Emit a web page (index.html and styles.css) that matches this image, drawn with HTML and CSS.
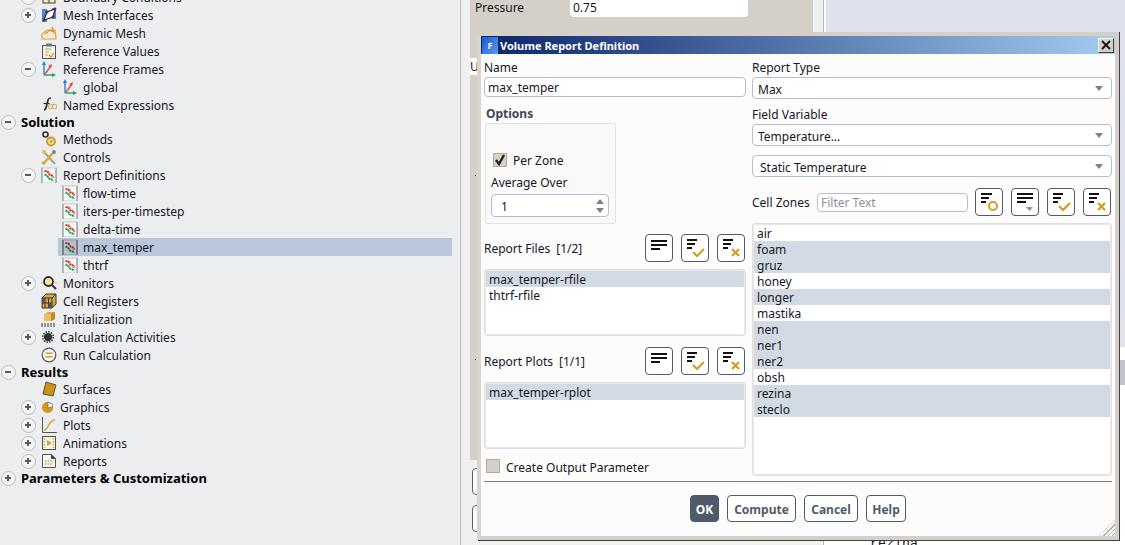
FILE: index.html
```html
<!DOCTYPE html>
<html lang="en">
<head>
    <meta charset="UTF-8">
    <link rel="stylesheet" href="styles.css">
    <title>Volume Report Definition</title>
</head>
<body>

    <svg class="defs" width="0" height="0">
        <symbol id="i-boundary" viewBox="0 0 16 16"><rect x="2" y="2" width="12" height="12" fill="#f3e6c4" stroke="#444"/><path d="M2 8h12M8 2v12" stroke="#444"/></symbol>
        <symbol id="i-interface" viewBox="0 0 16 16"><rect x="1" y="2" width="5" height="13" fill="#4a86d8"/><rect x="11" y="1" width="4" height="11" fill="#4a86d8"/><path d="M3 13 6 5l8-3-2 8z" fill="#fff" stroke="#402028" stroke-width="1.2"/><circle cx="6" cy="5" r="1.4" fill="#7a1c28"/><circle cx="12" cy="10" r="1.4" fill="#7a1c28"/><circle cx="3" cy="13" r="1.4" fill="#7a1c28"/><circle cx="14" cy="2" r="1.4" fill="#7a1c28"/></symbol>
        <symbol id="i-dynamic" viewBox="0 0 16 16"><path d="M1 14V9l5-4h8l1 9z" fill="#f4ecd8" stroke="#d8a840" stroke-width="1.2"/><path d="M4 9l5-4 4 2-2-5" fill="none" stroke="#d09a28" stroke-width="1.4"/></symbol>
        <symbol id="i-refvalues" viewBox="0 0 16 16"><rect x="1.5" y="2.5" width="13" height="13" fill="#f1f1ee" stroke="#555"/><rect x="5" y="0.5" width="6" height="3" fill="#777"/><path d="M4 6h6M4 9h4M4 12h3" stroke="#d8a030" stroke-width="1.2"/><path d="M8 12l2 2 3-4" fill="none" stroke="#c99422" stroke-width="1.2"/></symbol>
        <symbol id="i-frames" viewBox="0 0 16 16"><path d="M3 14V3" stroke="#2a7fc8" stroke-width="1.4"/><path d="M3 0 1 4h4z" fill="#2a7fc8"/><path d="M3 14h10" stroke="#2a9a60" stroke-width="1.4"/><path d="M15 14l-4-2v4z" fill="#2a9a60"/><path d="M4 13l6-8" stroke="#e04a4a" stroke-width="1.4"/><path d="M11 3l-4 2 3 2z" fill="#e04a4a"/></symbol>
        <symbol id="i-methods" viewBox="0 0 16 16"><circle cx="4.5" cy="3.5" r="2.5" fill="none" stroke="#333" stroke-width="1.6"/><circle cx="10" cy="10.5" r="4" fill="#f0d890" stroke="#d09a28" stroke-width="1.8"/><circle cx="10" cy="10.5" r="1.2" fill="#d09a28"/></symbol>
        <symbol id="i-controls" viewBox="0 0 16 16"><path d="M14 15 3 3" stroke="#a8a290" stroke-width="2"/><path d="M2 15 13 3" stroke="#d8a838" stroke-width="2.4"/><circle cx="3" cy="3" r="2" fill="#e0c060"/><circle cx="13" cy="3" r="2" fill="#8a8678"/><circle cx="2.5" cy="14" r="1.6" fill="#d0a030"/></symbol>
        <symbol id="i-report" viewBox="0 0 16 16"><rect x="0.500" y="1" width="15" height="15" fill="#f7f7f7" stroke="#c4c8cc"/><path d="M1 1v15M15 1v15" stroke="#a4aab0" stroke-width="1.600"/><path d="M3.500 4l3 .5 2 3 2.500 1 1.500 2" fill="none" stroke="#e02828" stroke-width="2" stroke-dasharray="2.200 .5"/><path d="M3.500 7.500l2.500 1 2 3 2.500 1 2 1" fill="none" stroke="#20a840" stroke-width="2" stroke-dasharray="2.200 .5"/></symbol>
        <symbol id="i-report-sel" viewBox="0 0 16 16"><rect x="0.500" y="1" width="15" height="15" fill="#b8c2cc" stroke="#8f98a2"/><path d="M1 1v15M15 1v15" stroke="#6f757c" stroke-width="1.600"/><path d="M3.500 4l3 .5 2 3 2.500 1 1.500 2" fill="none" stroke="#a02838" stroke-width="2" stroke-dasharray="2.200 .5"/><path d="M3.500 7.500l2.500 1 2 3 2.500 1 2 1" fill="none" stroke="#207840" stroke-width="2" stroke-dasharray="2.200 .5"/></symbol>
        <symbol id="i-monitors" viewBox="0 0 16 16"><path d="M0 8h2M14 8h2" stroke="#d8b060"/><circle cx="7.5" cy="6.500" r="4.500" fill="#f4e4b0" stroke="#2a2a2a" stroke-width="1.800"/><path d="M11 10l4 4" stroke="#333" stroke-width="2"/></symbol>
        <symbol id="i-registers" viewBox="0 0 16 16"><path d="M1 5 5 1h10v10l-4 4H1z" fill="#d8a838" stroke="#333"/><path d="M1 5h10v10M11 5l4-4M4 5v10M7.5 5v10M1 10h10" fill="none" stroke="#333"/><rect x="1" y="5" width="3" height="5" fill="#555"/><rect x="7.5" y="10" width="3.5" height="5" fill="#555"/></symbol>
        <symbol id="i-calc" viewBox="0 0 16 16"><circle cx="8" cy="8" r="5.5" fill="#2e3238"/><circle cx="8" cy="8" r="7" fill="none" stroke="#2e3238" stroke-width="2" stroke-dasharray="2 1.6"/></symbol>
        <symbol id="i-run" viewBox="0 0 16 16"><circle cx="8" cy="8" r="6.8" fill="#f4f4f2" stroke="#555" stroke-width="1.2"/><path d="M4.5 6.3h7M4.5 9.7h7" stroke="#d8a020" stroke-width="1.6"/></symbol>
        <symbol id="i-surfaces" viewBox="0 0 16 16"><path d="M5 1l10 3-3 11-10-2z" fill="#cc9410" stroke="#555"/></symbol>
        <symbol id="i-graphics" viewBox="0 0 16 16"><circle cx="7.500" cy="8.500" r="7.500" fill="#d0981c"/><path d="M8 1.500l6.500 2.500-1 4-5.500 1z" fill="#f4f4f4" stroke="#666" stroke-width=".8"/></symbol>
        <symbol id="i-plots" viewBox="0 0 16 16"><path d="M1.5 0v15.5H16" fill="none" stroke="#555"/><path d="M3 13c5 0 4-10 11-10" fill="none" stroke="#d8a030" stroke-width="1.3"/></symbol>
        <symbol id="i-anim" viewBox="0 0 16 16"><rect x="1.5" y="1.5" width="13" height="13" fill="#f6f4ec" stroke="#555"/><path d="M3.5 3v10M12.5 3v10" stroke="#d8a030" stroke-dasharray="1.5 1.5" stroke-width="1.5"/><path d="M6 5l5 3-5 3z" fill="#d8a030"/></symbol>
        <symbol id="i-reports" viewBox="0 0 16 16"><path d="M1.5 1.5h9l4 4v9h-13z" fill="#f6f6f4" stroke="#555"/><path d="M10.5 1.5v4h4" fill="#444" stroke="#444"/><path d="M4 8h8M4 11h8" stroke="#d8a030" stroke-dasharray="1.5 1.2" stroke-width="1.5"/></symbol>
        <symbol id="b-lines" viewBox="0 0 26 26"><path d="M5 6h16M5 10h16M5 14h9" stroke="#111" stroke-width="2"/></symbol>
        <symbol id="b-all" viewBox="0 0 26 26"><path d="M5 5h16M5 9h16M5 13h9" stroke="#111" stroke-width="2"/><path d="M14 18h7l-3.500 4z" fill="#8d95a0"/></symbol>
        <symbol id="b-circle" viewBox="0 0 26 26"><path d="M5 5h11M5 9h8M5 13h5" stroke="#111" stroke-width="2"/><circle cx="17" cy="17" r="4" fill="none" stroke="#d39e1e" stroke-width="2"/></symbol>
        <symbol id="b-check" viewBox="0 0 26 26"><path d="M5 5h10M5 9h8M5 13h5" stroke="#111" stroke-width="2"/><path d="M11 17l4 4 7-7" fill="none" stroke="#d39e1e" stroke-width="2.200"/></symbol>
        <symbol id="b-cross" viewBox="0 0 26 26"><path d="M5 5h10M5 9h8M5 13h5" stroke="#111" stroke-width="2"/><path d="M14 14l7 7M21 14l-7 7" fill="none" stroke="#d39e1e" stroke-width="2.200"/></symbol>
    </svg>

    <div class="tree">
        <div class="row lv1"><span class="exp plus"></span><svg class="ico"><use href="#i-boundary"/></svg>Boundary Conditions</div>
        <div class="row lv1"><span class="exp plus"></span><svg class="ico"><use href="#i-interface"/></svg>Mesh Interfaces</div>
        <div class="row lv1"><span class="noexp"></span><svg class="ico"><use href="#i-dynamic"/></svg>Dynamic Mesh</div>
        <div class="row lv1"><span class="noexp"></span><svg class="ico"><use href="#i-refvalues"/></svg>Reference Values</div>
        <div class="row lv1"><span class="exp"></span><svg class="ico"><use href="#i-frames"/></svg>Reference Frames</div>
        <div class="row lv2"><svg class="ico"><use href="#i-frames"/></svg>global</div>
        <div class="row lv1"><span class="noexp"></span><svg class="ico" viewBox="0 0 16 16"><path d="M3 13c2 0 2-2 3-6s1-6 4-6" fill="none" stroke="#2c2c2c" stroke-width="1.700"/><path d="M2.500 6.500h6" stroke="#2c2c2c" stroke-width="1.200"/><circle cx="9.500" cy="9.500" r="2.200" fill="none" stroke="#d8b060" stroke-width="1.100"/><circle cx="13.500" cy="9.500" r="2.200" fill="none" stroke="#d8b060" stroke-width="1.100"/></svg>Named Expressions</div>
        <div class="row lv0"><span class="exp"></span>Solution</div>
        <div class="row lv1"><span class="noexp"></span><svg class="ico"><use href="#i-methods"/></svg>Methods</div>
        <div class="row lv1"><span class="noexp"></span><svg class="ico"><use href="#i-controls"/></svg>Controls</div>
        <div class="row lv1"><span class="exp"></span><svg class="ico"><use href="#i-report"/></svg>Report Definitions</div>
        <div class="row lv2"><svg class="ico"><use href="#i-report"/></svg>flow-time</div>
        <div class="row lv2"><svg class="ico"><use href="#i-report"/></svg>iters-per-timestep</div>
        <div class="row lv2"><svg class="ico"><use href="#i-report"/></svg>delta-time</div>
        <div class="row lv2 selected"><svg class="ico"><use href="#i-report-sel"/></svg>max_temper</div>
        <div class="row lv2"><svg class="ico"><use href="#i-report"/></svg>thtrf</div>
        <div class="row lv1"><span class="exp plus"></span><svg class="ico"><use href="#i-monitors"/></svg>Monitors</div>
        <div class="row lv1"><span class="noexp"></span><svg class="ico"><use href="#i-registers"/></svg>Cell Registers</div>
        <div class="row lv1"><span class="noexp"></span><svg class="ico init-ico" viewBox="0 0 16 16"><path d="M3 3l4-2h7v7l-4 2H3z" fill="#e0aa38"/><path d="M3 3h7v7H3z" fill="#ecc060"/><path d="M10 3l4-2v7l-4 2z" fill="#c08a20"/><path d="M0 13h14M0 15h14" stroke="#333" stroke-width="1.200" stroke-dasharray="2 1"/></svg>Initialization</div>
        <div class="row lv1 tight"><span class="exp plus"></span><svg class="ico"><use href="#i-calc"/></svg>Calculation Activities</div>
        <div class="row lv1"><span class="noexp"></span><svg class="ico"><use href="#i-run"/></svg>Run Calculation</div>
        <div class="row lv0"><span class="exp"></span>Results</div>
        <div class="row lv1"><span class="noexp"></span><svg class="ico"><use href="#i-surfaces"/></svg>Surfaces</div>
        <div class="row lv1 tight"><span class="exp plus"></span><svg class="ico"><use href="#i-graphics"/></svg>Graphics</div>
        <div class="row lv1"><span class="exp plus"></span><svg class="ico"><use href="#i-plots"/></svg>Plots</div>
        <div class="row lv1"><span class="exp plus"></span><svg class="ico"><use href="#i-anim"/></svg>Animations</div>
        <div class="row lv1"><span class="exp plus"></span><svg class="ico"><use href="#i-reports"/></svg>Reports</div>
        <div class="row lv0"><span class="exp plus"></span>Parameters &amp; Customization</div>
    </div>

    <div class="console-side">
        <div class="panel-top">
            <span class="pressure-label">Pressure</span>
            <span class="pressure-input">0.75</span>
        </div>
        <div class="panel-tab">U</div>
        <div class="panel-main"></div>
        <div class="ghost-btn"></div>
        <div class="ghost-btn"></div>
    </div>

    <div class="viewer">
        <div class="view-area"></div>
        <div class="view-tool"></div>
        <div class="view-head"></div>
        <div class="view-text">rezina</div>
    </div>

    <div class="dialog">
        <div class="titlebar">
            <span class="app-ico">F</span>
            <span class="title-text">Volume Report Definition</span>
            <span class="close-btn"><svg width="10" height="10" viewBox="0 0 10 10"><path d="M1 1l8 8M9 1 1 9" stroke="#111" stroke-width="1.800"/></svg></span>
        </div>
        <div class="dialog-body">
            <div class="col-left">
                <div class="lbl">Name</div>
                <div class="field name-field">max_temper</div>
                <div class="lbl options-lbl">Options</div>
                <div class="group">
                    <div class="check-row zone-row">
                        <span class="check on"><svg width="12" height="12" viewBox="0 0 12 12"><path d="M2 6l3 4 5-9" fill="none" stroke="#222" stroke-width="2.400"/></svg></span>
                        <span>Per Zone</span>
                    </div>
                    <div class="lbl avg-lbl">Average Over</div>
                    <div class="spinner">
                        <span class="spin-value">1</span>
                        <span class="spin-arrows"><i class="arrow-up"></i><i class="arrow-down"></i></span>
                    </div>
                </div>

                <div class="list-head head-files">
                    <span class="list-title">Report Files<span class="count">[1/2]</span></span>
                    <span class="tool-btn"><svg><use href="#b-lines"/></svg></span>
                    <span class="tool-btn"><svg><use href="#b-check"/></svg></span>
                    <span class="tool-btn"><svg><use href="#b-cross"/></svg></span>
                </div>
                <div class="list small-list">
                    <div class="item sel">max_temper-rfile</div>
                    <div class="item">thtrf-rfile</div>
                </div>

                <div class="list-head head-plots">
                    <span class="list-title">Report Plots<span class="count">[1/1]</span></span>
                    <span class="tool-btn"><svg><use href="#b-lines"/></svg></span>
                    <span class="tool-btn"><svg><use href="#b-check"/></svg></span>
                    <span class="tool-btn"><svg><use href="#b-cross"/></svg></span>
                </div>
                <div class="list small-list">
                    <div class="item sel">max_temper-rplot</div>
                </div>

                <div class="check-row output-row"><span class="check"></span><span class="output-text">Create Output Parameter</span></div>
            </div>

            <div class="col-right">
                <div class="lbl">Report Type</div>
                <div class="select select-first"><span>Max</span><i class="arrow-down big"></i></div>
                <div class="lbl field-lbl">Field Variable</div>
                <div class="select select-first"><span>Temperature...</span><i class="arrow-down big"></i></div>
                <div class="select select-second"><span>Static Temperature</span><i class="arrow-down big"></i></div>
                <div class="zones-head">
                    <span class="zones-lbl">Cell Zones</span>
                    <span class="filter">Filter Text</span>
                    <span class="tool-btn"><svg><use href="#b-circle"/></svg></span>
                    <span class="tool-btn"><svg><use href="#b-all"/></svg></span>
                    <span class="tool-btn"><svg><use href="#b-check"/></svg></span>
                    <span class="tool-btn"><svg><use href="#b-cross"/></svg></span>
                </div>
                <div class="list zones-list">
                    <div class="item">air</div>
                    <div class="item sel">foam</div>
                    <div class="item sel">gruz</div>
                    <div class="item">honey</div>
                    <div class="item sel">longer</div>
                    <div class="item">mastika</div>
                    <div class="item sel">nen</div>
                    <div class="item sel">ner1</div>
                    <div class="item sel">ner2</div>
                    <div class="item">obsh</div>
                    <div class="item sel">rezina</div>
                    <div class="item sel">steclo</div>
                </div>
            </div>
        </div>
        <div class="separator"></div>
        <div class="actions">
            <span class="btn primary btn-ok">OK</span>
            <span class="btn btn-compute">Compute</span>
            <span class="btn btn-cancel">Cancel</span>
            <span class="btn btn-help">Help</span>
        </div>
        <div class="grip"></div>
    </div>

</body>
</html>
```

FILE: styles.css
```css
* {
    box-sizing: border-box;
}

html, body {
    margin: 0;
    height: 545px;
    overflow: hidden;
}

body {
    display: flex;
    width: 1125px;
    background: #f0f0f0;
    font-family: "Noto Sans", sans-serif;
    font-size: 12px;
    color: #16161f;
}

.defs {
    position: absolute;
}

/* arbre de gauche */
.tree {
    width: 461px;
    height: 545px;
    flex: none;
    padding-right: 8px;
    background: #ebedef;
    border-right: 1px solid #b9b9b9;
    box-shadow: inset -2px 0 0 #f4f4f4;
    overflow: hidden;
}

.row {
    display: flex;
    align-items: center;
    height: 18px;
    white-space: nowrap;
}

.row:first-child {
    margin-top: -12px;
}

.lv0 {
    height: 16px;
    padding-left: 1px;
    font-weight: bold;
    font-size: 13px;
    color: #000;
}

.lv0 .exp {
    margin-right: 5px;
}

.lv1 {
    padding-left: 21px;
}

.lv2 {
    margin-left: 58px;
    padding-left: 4px;
}

.selected {
    background: #b8c7d9;
}

.exp {
    position: relative;
    flex: none;
    width: 15px;
    height: 15px;
    border: 1.500px solid #b9bdc2;
    border-radius: 50%;
    background: #f3f4f5;
}

.exp::before {
    content: "";
    position: absolute;
    left: 3px;
    top: 5px;
    width: 6px;
    height: 2px;
    background: #555b62;
}

.plus::after {
    content: "";
    position: absolute;
    left: 5px;
    top: 3px;
    width: 2px;
    height: 6px;
    background: #555b62;
}

.noexp {
    flex: none;
    width: 15px;
}

.ico {
    flex: none;
    width: 16px;
    height: 16px;
    margin: 0 6px 0 5px;
}

.lv2 .ico {
    margin: 0 5px 0 0;
}

.tight .ico {
    width: 12px;
    height: 12px;
    margin: 0 6px 0 6px;
}

/* panneau derriere le dialogue */
.console-side {
    width: 343px;
    flex: none;
    margin-left: 9px;
}

.panel-top {
    display: flex;
    align-items: flex-start;
    height: 58px;
    background: #d4d0c8;
}

.pressure-label {
    width: 100px;
    padding-left: 5px;
    line-height: 15px;
}

.pressure-input {
    width: 178px;
    height: 17px;
    padding-left: 3px;
    line-height: 15px;
    background: #fff;
    border-radius: 0 0 4px 4px;
}

.panel-tab {
    height: 17px;
    background: #fff;
    line-height: 17px;
}

.panel-main {
    height: 385px;
    background:
        linear-gradient(#111, #111) 5px 100px / 1px 1px no-repeat,
        linear-gradient(#111, #111) 5px 284px / 1px 1px no-repeat,
        #d4d0c8;
}

.ghost-btn {
    width: 40px;
    height: 27px;
    margin: 8px 0 0 2px;
    border: 1px solid #5a6470;
    border-radius: 4px;
    background: #fbfbfb;
}

.ghost-btn + .ghost-btn {
    margin-top: 10px;
}

.viewer {
    flex: 1;
    margin-left: 10px;
    padding-left: 4px;
    border-left: 1px solid #b9b9b9;
    background: #fff;
}

.view-area {
    height: 320px;
    margin-left: -2px;
    background: #dee2ec;
}

.view-tool {
    height: 27px;
    background: #e2e3e8;
}

.view-head {
    height: 25px;
    margin-top: 13px;
    background: #c0c4cc;
}

.view-text {
    margin: 152px 0 0 42px;
    font-family: "Liberation Mono", monospace;
    font-size: 13.330px;
    line-height: 14px;
}

/* dialogue */
.dialog {
    position: absolute;
    left: 477px;
    top: 32px;
    width: 642px;
    height: 508px;
    border: 4px solid #d4d0c8;
    border-left-color: #d8d5ce;
    background: #fcfcfc;
    box-shadow: 1px 1px 0 #404040, 1px 0 0 #404040;
}

.titlebar {
    display: flex;
    align-items: center;
    height: 18px;
    background: linear-gradient(to right, #0a246a, #a6caf0);
}

.app-ico {
    width: 16px;
    height: 17px;
    margin: 0 2px 0 1px;
    background: linear-gradient(135deg, #1c5ad0, #5a9af0);
    color: #fff;
    font-size: 9px;
    font-weight: bold;
    line-height: 17px;
    text-align: center;
}

.title-text {
    flex: 1;
    font-weight: bold;
    font-size: 11px;
    color: #fff;
}

.close-btn {
    display: flex;
    align-items: center;
    justify-content: center;
    width: 16px;
    height: 15px;
    margin-right: 1px;
    background: #d4d0c8;
    border: 1px solid;
    border-color: #fff #404040 #404040 #fff;
}

.dialog-body {
    display: flex;
    gap: 6px;
    padding: 6px 3px 0;
}

.col-left {
    width: 262px;
}

.col-right {
    width: 360px;
}

.lbl {
    height: 14px;
    line-height: 16px;
}

.field {
    height: 20px;
    margin-top: 3px;
    padding-left: 3px;
    border: 1px solid #b4bfcc;
    border-radius: 4px;
    background: #fff;
    line-height: 19px;
}

.options-lbl {
    margin: 9px 0 0 2px;
    font-weight: bold;
    color: #3d4757;
}

.group {
    width: 131px;
    height: 101px;
    margin: 3px 0 0 1px;
    padding: 29px 0 0 5px;
    border: 1px solid #e2e2e2;
    border-radius: 2px;
    background: #f9f9f9;
}

.check-row {
    display: flex;
    align-items: center;
    height: 14px;
}

.zone-row {
    margin-left: 2px;
}

.check {
    display: flex;
    align-items: center;
    justify-content: center;
    width: 14px;
    height: 14px;
    margin-right: 6px;
    border: 1px solid #b0aca4;
    background: #d4d0c8;
}

.avg-lbl {
    margin-top: 8px;
}

.spinner {
    display: flex;
    align-items: center;
    justify-content: space-between;
    width: 118px;
    height: 23px;
    margin-top: 5px;
    padding: 0 2px 0 9px;
    border: 1px solid #b4bfcc;
    border-radius: 4px;
    background: #fff;
}

.spin-value {
    margin-top: 2px;
}

.spin-arrows {
    display: flex;
    flex-direction: column;
    gap: 4px;
    margin-right: 2px;
}

.arrow-up,
.arrow-down {
    display: block;
    width: 0;
    height: 0;
    border-left: 4.500px solid transparent;
    border-right: 4.500px solid transparent;
}

.arrow-up {
    border-bottom: 5px solid #7a828c;
}

.arrow-down {
    border-top: 5px solid #7a828c;
}

.big {
    margin-right: 8px;
}

.list-head {
    display: flex;
    align-items: center;
    gap: 8px;
    height: 28px;
    padding-right: 1px;
}

.head-files {
    margin-top: 10px;
}

.head-plots {
    margin-top: 11px;
}

.list-title {
    flex: 1;
}

.count {
    margin-left: 6px;
}

.tool-btn {
    flex: none;
    width: 28px;
    height: 28px;
    border: 1px solid #4f5b6b;
    border-radius: 4px;
    background: #fff;
}

.tool-btn svg {
    display: block;
    width: 26px;
    height: 26px;
}

.list {
    margin-top: 7px;
    padding: 1px;
    border: 1px solid #e0e0e0;
    border-radius: 3px;
    box-shadow: inset 0 0 0 1px #e8e8e8;
    background: #fff;
}

.small-list {
    height: 67px;
}

.item {
    height: 16px;
    padding-left: 3px;
    line-height: 18px;
}

.sel {
    background: #d2dae3;
}

.output-row {
    margin: 10px 0 0 2px;
}

.output-text {
    margin-top: 2px;
}

.select {
    display: flex;
    align-items: center;
    justify-content: space-between;
    height: 22px;
    padding-left: 5px;
    border: 1px solid #b4bfcc;
    border-radius: 4px;
    background: #fff;
}

.select span {
    margin-top: 2px;
}

.select-first {
    margin-top: 3px;
}

.select-second {
    margin-top: 9px;
    padding-left: 7px;
}

.field-lbl {
    margin-top: 8px;
}

.zones-head {
    display: flex;
    align-items: center;
    gap: 8px;
    height: 28px;
    margin-top: 11px;
}

.zones-lbl {
    width: 57px;
    white-space: nowrap;
}

.filter {
    width: 151px;
    height: 19px;
    margin-right: -1px;
    padding-left: 3px;
    border: 1px solid #b4bfcc;
    border-radius: 4px;
    background: #fff;
    color: #8b8f94;
    line-height: 17px;
}

.zones-list {
    height: 253px;
}

.separator {
    height: 1px;
    margin: 5px 3px 0;
    background: #7e7e7e;
}

.actions {
    display: flex;
    justify-content: center;
    gap: 8px;
    margin-top: 13px;
}

.btn {
    height: 27px;
    border: 1px solid #4f5b6b;
    border-radius: 4px;
    background: #fff;
    color: #4f5b6b;
    font-weight: bold;
    line-height: 27px;
    text-align: center;
}

.primary {
    background: #4f5b6b;
    color: #fff;
}

.btn-ok { width: 29px; }
.btn-compute { width: 69px; }
.btn-cancel { width: 54px; }
.btn-help { width: 40px; }

.grip {
    position: absolute;
    right: 0;
    bottom: 0;
    width: 16px;
    height: 16px;
    background: repeating-linear-gradient(135deg, transparent 0 2px, #a8a8a8 2px 3px);
    clip-path: polygon(100% 0, 100% 100%, 0 100%);
}
```
